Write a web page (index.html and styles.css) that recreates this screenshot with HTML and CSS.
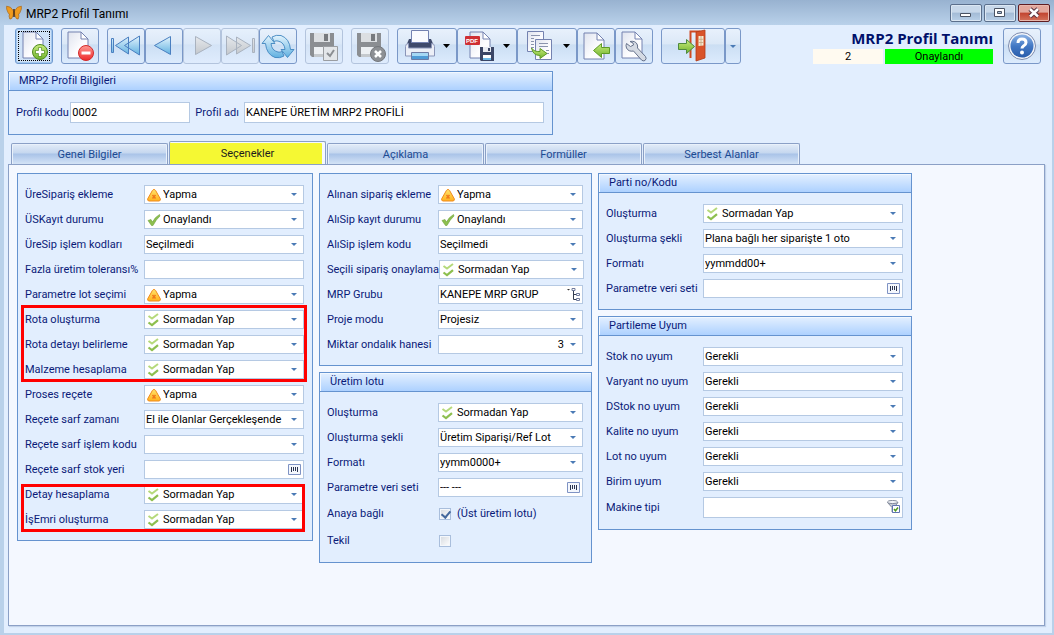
FILE: index.html
```html
<!DOCTYPE html>
<html lang="tr">

<head>
    <meta charset="UTF-8">
    <meta name="viewport" content="width=device-width, initial-scale=1.0">
    <title>MRP2 Profil Tanımı</title>
    <link rel="stylesheet" href="styles.css">
</head>

<body>
    <!-- Ortak ikonlar -->
    <svg class="defs" aria-hidden="true">
        <defs>
            <linearGradient id="gPage" x1="0" y1="0" x2="1" y2="1">
                <stop offset="0" stop-color="#dfe3ee" />
                <stop offset="0.6" stop-color="#fdfdff" />
            </linearGradient>
            <linearGradient id="gBlue" x1="0" y1="0" x2="0" y2="1">
                <stop offset="0" stop-color="#e4f4fd" />
                <stop offset="1" stop-color="#5fb0e0" />
            </linearGradient>
            <linearGradient id="gGray" x1="0" y1="0" x2="0" y2="1">
                <stop offset="0" stop-color="#e6e9ed" />
                <stop offset="1" stop-color="#c3c7cc" />
            </linearGradient>
            <linearGradient id="gGreen" x1="0" y1="0" x2="0" y2="1">
                <stop offset="0" stop-color="#c9ec7e" />
                <stop offset="1" stop-color="#6fb32c" />
            </linearGradient>
            <linearGradient id="gRed" x1="0" y1="0" x2="0" y2="1">
                <stop offset="0" stop-color="#ff9a94" />
                <stop offset="1" stop-color="#ee2a2a" />
            </linearGradient>
            <linearGradient id="gHelp" x1="0" y1="0" x2="0" y2="1">
                <stop offset="0" stop-color="#8eb4e6" />
                <stop offset="0.5" stop-color="#4278c4" />
                <stop offset="1" stop-color="#2a5cab" />
            </linearGradient>
            <linearGradient id="gWarn" x1="0" y1="0" x2="0" y2="1">
                <stop offset="0" stop-color="#ffe36b" />
                <stop offset="1" stop-color="#ffb21e" />
            </linearGradient>
        </defs>
        <symbol id="page" viewBox="0 0 22 28">
            <path d="M1 1h13l7 7v19H1z" fill="url(#gPage)" stroke="#7482b0" />
            <path d="M14 1v7h7z" fill="#fff" stroke="#7482b0" />
        </symbol>
        <symbol id="floppy" viewBox="0 0 24 24">
            <path d="M0 0h24v24H2l-2-2z" fill="#8b8e92" />
            <path d="M4 0h16v9H4z" fill="#dcdfe2" />
            <path d="M14 1h4v7h-4z" fill="#777a7e" />
            <path d="M4 14h16v10H4z" fill="#edf0f3" />
            <path d="M4 21h16v3H4z" fill="#c5c9cd" />
        </symbol>
        <symbol id="caret" viewBox="0 0 7 4">
            <path d="M0 0h7L3.500 4z" fill="#000" />
        </symbol>
        <symbol id="warn" viewBox="0 0 14 13">
            <path d="M7 1q1 0 1.600 1l4.700 8.300q.5 2-1.300 2.200H2q-1.800-.2-1.300-2.200L5.400 2Q6 1 7 1z" fill="url(#gWarn)" stroke="#f08a1c" />
            <path d="M5.500 6.500l3 3.500M8.500 6.500l-3 3.500" stroke="#f07a1c" stroke-width="1.500" />
        </symbol>
        <symbol id="tick" viewBox="0 0 14 13">
            <path d="M1 7l3-1 1.500 2.500Q8 3.500 12.500 1l.5 1.500Q9 6 6 12H4.500z" fill="#8dbf4f" stroke="#6fa33c" stroke-width=".6" />
        </symbol>
        <symbol id="ticks" viewBox="0 0 14 14">
            <path d="M1.500 3l3.500 2.500 6-4.500" fill="none" stroke="#b5d97a" stroke-width="2" />
            <path d="M1.500 9.500l3.500 2.700 6-5" fill="none" stroke="#8dbf4f" stroke-width="2.200" />
        </symbol>
        <symbol id="bars" viewBox="0 0 13 11">
            <path d="M.5.5h12v10H.5z" fill="#f4f7fd" stroke="#7f93c4" />
            <path d="M3.500 3v5M5.500 3v4M7.500 3v4M9.500 3v5" stroke="#2b3550" />
        </symbol>
    </svg>

    <header class="titlebar">
        <svg class="logo" viewBox="0 0 16 16">
            <path d="M7.500 6Q5 1 .6 1.200 0 4 2 7.500q.6 1.500 1.500 1.500-1 2 .3 5 2 1 3.500-4z" fill="#f09b1e" stroke="#a8681c" stroke-width=".7" />
            <path d="M8.500 6Q11 1 15.400 1.200 16 4 14 7.500q-.6 1.500-1.500 1.500 1 2-.3 5-2 1-3.500-4z" fill="#f09b1e" stroke="#a8681c" stroke-width=".7" />
            <path d="M8 4v8" stroke="#4a2c10" stroke-width="1.500" />
        </svg>
        <span class="caption">MRP2 Profil Tanımı</span>
        <div class="window-buttons">
            <button type="button" aria-label="Simge durumuna küçült">
                <svg viewBox="0 0 30 16"><path d="M9.500 8.500h10v3h-10z" fill="#fff" stroke="#4a5363" /></svg>
            </button>
            <button type="button" aria-label="Ekranı kapla">
                <svg viewBox="0 0 30 16"><path d="M9.500 3.500h10v8h-10z" fill="#fff" stroke="#4a5363" /><path d="M12.500 6.500h4v2h-4z" fill="#a9bfd9" stroke="#4a5363" /></svg>
            </button>
            <button type="button" class="close" aria-label="Kapat">
                <svg viewBox="0 0 30 16"><path d="M11 4l8 7.500M19 4l-8 7.500" stroke="#5a3440" stroke-width="4.500" /><path d="M11 4l8 7.500M19 4l-8 7.500" stroke="#fff" stroke-width="2.500" /></svg>
            </button>
        </div>
    </header>

    <main class="window">
        <div class="toolbar">
            <div class="tools">
                <button type="button" class="tool focused" aria-label="Yeni">
                    <svg viewBox="0 0 36 34">
                        <use href="#page" x="6" y="2" width="22" height="28" />
                        <circle cx="24" cy="23" r="7.500" fill="url(#gGreen)" stroke="#4f8a1e" />
                        <path d="M24 18.500v9M19.500 23h9" stroke="#4f8a1e" stroke-width="4" />
                        <path d="M24 19v8M20 23h8" stroke="#fff" stroke-width="2.500" />
                    </svg>
                </button>
                <button type="button" class="tool" aria-label="Sil">
                    <svg viewBox="0 0 36 34">
                        <use href="#page" x="5" y="2" width="22" height="28" />
                        <circle cx="24" cy="24" r="7.500" fill="url(#gRed)" stroke="#d42a2a" />
                        <path d="M19.500 24h9" stroke="#fff" stroke-width="3" />
                    </svg>
                </button>
                <div class="tool-group">
                    <button type="button" class="tool" aria-label="İlk kayıt">
                        <svg viewBox="0 0 36 34" fill="url(#gBlue)" stroke="#4a7fc0">
                            <path d="M3.500 9.500h2v14h-2zM20.500 8v17L7.500 16.500zM31.500 7v19L16.500 16.500z" />
                        </svg>
                    </button>
                    <button type="button" class="tool" aria-label="Önceki kayıt">
                        <svg viewBox="0 0 36 34" fill="url(#gBlue)" stroke="#4a7fc0">
                            <path d="M24.500 7.500v18L8.500 16.500z" />
                        </svg>
                    </button>
                    <button type="button" class="tool" aria-label="Sonraki kayıt" disabled>
                        <svg viewBox="0 0 36 34" fill="url(#gGray)" stroke="#a9b2bf">
                            <path d="M11.500 7.500v18l16-9z" />
                        </svg>
                    </button>
                    <button type="button" class="tool" aria-label="Son kayıt" disabled>
                        <svg viewBox="0 0 36 34" fill="url(#gGray)" stroke="#a9b2bf">
                            <path d="M4.500 7v19l15-9.500zM14.500 8v17l14-8.500zM30.500 9.500h2v14h-2z" />
                        </svg>
                    </button>
                    <button type="button" class="tool" aria-label="Yenile">
                        <svg viewBox="0 0 36 34" fill="url(#gBlue)" stroke="#3f86bf" stroke-width=".9">
                            <path d="M8.500 6.500l6.500 8h-4q.5 7 7 8.500 2 .5 4-.5l2 4.500q-4 2.500-9 1.500Q6.500 25.500 5.500 14.500H2z" />
                            <path d="M27.500 28.500l-6.500-8h4q-.5-7-7-8.500-2-.5-4 .5l-2-4.500q4-2.500 9-1.500Q29.500 9.500 30.500 20.500H34z" />
                        </svg>
                    </button>
                </div>
                <button type="button" class="tool" aria-label="Kaydet" disabled>
                    <svg viewBox="0 0 36 34">
                        <use href="#floppy" x="4" y="4" width="24" height="24" />
                        <path d="M17.500 17.500h14v14h-14z" fill="#e3e6e9" stroke="#9a9da1" />
                        <path d="M21 24l3 3 4-6" fill="none" stroke="#8b8e92" stroke-width="2" />
                    </svg>
                </button>
                <button type="button" class="tool" aria-label="Vazgeç" disabled>
                    <svg viewBox="0 0 36 34">
                        <use href="#floppy" x="5" y="4" width="24" height="24" />
                        <circle cx="26" cy="25" r="7.500" fill="#8d9094" stroke="#74777b" />
                        <path d="M23 22l6 6M29 22l-6 6" stroke="#fff" stroke-width="2.500" />
                    </svg>
                </button>
                <div class="tool-group">
                    <button type="button" class="tool wide" aria-label="Yazdır">
                        <svg viewBox="0 0 58 34">
                            <path d="M8 17l3-7h22l3 7v4H8z" fill="#3f4a6b" />
                            <path d="M13.500 1.500h17v12h-17z" fill="#fafbfe" stroke="#7482b0" />
                            <path d="M7.500 17.500q0-3 3-3V19h23v-4.500q3 0 3 3V27h-29z" fill="#eceff7" stroke="#8a95b8" />
                            <path d="M13.500 23.500h17v7h-17z" fill="#a5d8f5" stroke="#6c7ba5" />
                            <path d="M14 27h16v3H14z" fill="#4f9bd6" />
                            <use href="#caret" x="45" y="15" width="7" height="4" />
                        </svg>
                    </button>
                    <button type="button" class="tool wide" aria-label="PDF olarak kaydet">
                        <svg viewBox="0 0 58 34">
                            <use href="#page" x="11" y="2" width="22" height="28" />
                            <rect x="7" y="7" width="15" height="9" rx="1" fill="#cf2f33" />
                            <text x="8" y="14" class="pdf">PDF</text>
                            <path d="M22 18h14v14H23l-1-1z" fill="#3b4666" />
                            <path d="M25 18h8v5h-8z" fill="#e9ecf3" />
                            <path d="M30 19h2v3h-2z" fill="#3b4666" />
                            <path d="M25 26h8v5h-8z" fill="#fff" />
                            <path d="M25 29h8v2h-8z" fill="#6fb8e6" />
                            <use href="#caret" x="45" y="15" width="7" height="4" />
                        </svg>
                    </button>
                    <button type="button" class="tool wide" aria-label="Kopyala">
                        <svg viewBox="0 0 58 34">
                            <path d="M9.500 2.500h16v20h-16z" fill="url(#gPage)" stroke="#7482b0" />
                            <path d="M13 6.500h9M13 9.500h3M13 12.500h3M13 15.500h3M13 18.500h3" stroke="#8b94ae" />
                            <path d="M17.500 10.500h16v20h-16z" fill="url(#gPage)" stroke="#7482b0" />
                            <path d="M21 14.500h9M21 17.500h9M28 21.500h3M28 24.500h3" stroke="#8b94ae" />
                            <path d="M13.500 19q2.500 4 8.500 3.500v-3l7 5-7 5v-3q-7 0-8.500-7.500z" fill="url(#gGreen)" stroke="#5d9a26" />
                            <use href="#caret" x="45" y="15" width="7" height="4" />
                        </svg>
                    </button>
                    <button type="button" class="tool" aria-label="İçeri al">
                        <svg viewBox="0 0 36 34">
                            <use href="#page" x="5" y="3" width="22" height="28" />
                            <path d="M15.500 21.500l8-7v4h8v6h-8v4z" fill="url(#gGreen)" stroke="#5d9a26" />
                        </svg>
                    </button>
                    <button type="button" class="tool" aria-label="Ayarlar">
                        <svg viewBox="0 0 36 34">
                            <use href="#page" x="5" y="2" width="22" height="28" />
                            <path d="M14 12.500q5-1 7 2.500 1 2 .5 4l8 8.500q1.500 2-.5 4-2 1-3.500-.5l-8-9q-5 1-7-3-1-2.500 0-4.500l4 3 3-1.500-.5-2z" fill="#d5dae3" stroke="#66728c" />
                        </svg>
                    </button>
                </div>
                <div class="tool-group">
                    <button type="button" class="tool exit" aria-label="Çıkış">
                        <svg viewBox="0 0 62 34">
                            <path d="M28.500 29V2.500h10" fill="none" stroke="#cf4a22" stroke-width="2" />
                            <path d="M34 3l9-2v28l-9 3z" fill="#d9532a" stroke="#b23b16" stroke-width=".8" />
                            <path d="M36.500 7h5v9.500l-5 .5z" fill="#f6ead0" />
                            <path d="M39 7v10M36.500 10.300h5M36.500 13.500h5" stroke="#c9a27c" stroke-width=".8" />
                            <path d="M16.500 14.500h8v-4l8 7-8 7v-4h-8z" fill="url(#gGreen)" stroke="#4f8a3e" />
                        </svg>
                    </button>
                    <button type="button" class="tool drop" aria-label="Çıkış seçenekleri"></button>
                </div>
            </div>
            <div class="status">
                <h1>MRP2 Profil Tanımı</h1>
                <div class="status-row">
                    <span class="number">2</span>
                    <span class="approved">Onaylandı</span>
                </div>
            </div>
            <button type="button" class="tool" aria-label="Yardım">
                <svg viewBox="0 0 36 34">
                    <circle cx="18" cy="17" r="13.500" fill="#f4f6fa" stroke="#7d8bad" />
                    <circle cx="18" cy="17" r="11.500" fill="url(#gHelp)" />
                    <path d="M14 14q0-4 4-4t4 3.500q0 2-2.500 3.500-1.500 1-1.500 2.500" fill="none" stroke="#fff" stroke-width="3" />
                    <circle cx="18" cy="23.500" r="2" fill="#fff" />
                </svg>
            </button>
        </div>

        <section class="group profile">
            <h2>MRP2 Profil Bilgileri</h2>
            <div class="profile-fields">
                <label for="profilKodu">Profil kodu</label>
                <input type="text" id="profilKodu" class="code" value="0002">
                <label for="profilAdi">Profil adı</label>
                <input type="text" id="profilAdi" class="name" value="KANEPE ÜRETİM MRP2 PROFİLİ">
            </div>
        </section>

        <nav class="tabs">
            <button type="button">Genel Bilgiler</button>
            <button type="button" class="active">Seçenekler</button>
            <button type="button">Açıklama</button>
            <button type="button">Formüller</button>
            <button type="button">Serbest Alanlar</button>
        </nav>

        <div class="tab-panel">
            <div class="column first">
                <section class="group fields">
                    <div class="row">
                        <label for="ureSiparis">ÜreSipariş ekleme</label>
                        <div class="field select icon"><svg><use href="#warn" /></svg><select id="ureSiparis"><option>Yapma</option></select></div>
                    </div>
                    <div class="row">
                        <label for="usKayit">ÜSKayıt durumu</label>
                        <div class="field select icon"><svg><use href="#tick" /></svg><select id="usKayit"><option>Onaylandı</option></select></div>
                    </div>
                    <div class="row">
                        <label for="ureSipIslem">ÜreSip işlem kodları</label>
                        <div class="field select"><select id="ureSipIslem"><option>Seçilmedi</option></select></div>
                    </div>
                    <div class="row">
                        <label for="tolerans">Fazla üretim toleransı%</label>
                        <div class="field"><input type="text" id="tolerans"></div>
                    </div>
                    <div class="row">
                        <label for="lotSecimi">Parametre lot seçimi</label>
                        <div class="field select icon"><svg><use href="#warn" /></svg><select id="lotSecimi"><option>Yapma</option></select></div>
                    </div>
                    <div class="marked">
                        <div class="row">
                            <label for="rotaOlusturma">Rota oluşturma</label>
                            <div class="field select icon"><svg><use href="#ticks" /></svg><select id="rotaOlusturma"><option>Sormadan Yap</option></select></div>
                        </div>
                        <div class="row">
                            <label for="rotaDetayi">Rota detayı belirleme</label>
                            <div class="field select icon"><svg><use href="#ticks" /></svg><select id="rotaDetayi"><option>Sormadan Yap</option></select></div>
                        </div>
                        <div class="row">
                            <label for="malzeme">Malzeme hesaplama</label>
                            <div class="field select icon"><svg><use href="#ticks" /></svg><select id="malzeme"><option>Sormadan Yap</option></select></div>
                        </div>
                    </div>
                    <div class="row">
                        <label for="proses">Proses reçete</label>
                        <div class="field select icon"><svg><use href="#warn" /></svg><select id="proses"><option>Yapma</option></select></div>
                    </div>
                    <div class="row">
                        <label for="sarfZamani">Reçete sarf zamanı</label>
                        <div class="field select"><select id="sarfZamani"><option>El ile Olanlar Gerçekleşende</option></select></div>
                    </div>
                    <div class="row">
                        <label for="sarfIslem">Reçete sarf işlem kodu</label>
                        <div class="field select"><select id="sarfIslem"><option></option></select></div>
                    </div>
                    <div class="row">
                        <label for="sarfStok">Reçete sarf stok yeri</label>
                        <div class="field lookup"><input type="text" id="sarfStok"><svg><use href="#bars" /></svg></div>
                    </div>
                    <div class="marked short">
                        <div class="row">
                            <label for="detay">Detay hesaplama</label>
                            <div class="field select icon"><svg><use href="#ticks" /></svg><select id="detay"><option>Sormadan Yap</option></select></div>
                        </div>
                        <div class="row">
                            <label for="isEmri">İşEmri oluşturma</label>
                            <div class="field select icon"><svg><use href="#ticks" /></svg><select id="isEmri"><option>Sormadan Yap</option></select></div>
                        </div>
                    </div>
                </section>
            </div>

            <div class="column second">
                <section class="group fields">
                    <div class="row">
                        <label for="alinanSiparis">Alınan sipariş ekleme</label>
                        <div class="field select icon"><svg><use href="#warn" /></svg><select id="alinanSiparis"><option>Yapma</option></select></div>
                    </div>
                    <div class="row">
                        <label for="aliSipKayit">AlıSip kayıt durumu</label>
                        <div class="field select icon"><svg><use href="#tick" /></svg><select id="aliSipKayit"><option>Onaylandı</option></select></div>
                    </div>
                    <div class="row">
                        <label for="aliSipIslem">AlıSip işlem kodu</label>
                        <div class="field select"><select id="aliSipIslem"><option>Seçilmedi</option></select></div>
                    </div>
                    <div class="row">
                        <label for="seciliSiparis">Seçili sipariş onaylama</label>
                        <div class="field select icon"><svg><use href="#ticks" /></svg><select id="seciliSiparis"><option>Sormadan Yap</option></select></div>
                    </div>
                    <div class="row">
                        <label for="mrpGrubu">MRP Grubu</label>
                        <div class="field lookup">
                            <input type="text" id="mrpGrubu" value="KANEPE MRP GRUP">
                            <svg viewBox="0 0 13 13">
                                <path d="M0 1h3L1.500 2.500z" fill="#333" />
                                <path d="M6.500 3v8.500H9M6.500 6.500H9" fill="none" stroke="#333c50" />
                                <path d="M5 .5h3v2H5zM9.500 5.500h3v2h-3zM9.500 10.500h3v2h-3z" fill="#fff" stroke="#6f7a9c" />
                            </svg>
                        </div>
                    </div>
                    <div class="row">
                        <label for="projeModu">Proje modu</label>
                        <div class="field select"><select id="projeModu"><option>Projesiz</option></select></div>
                    </div>
                    <div class="row">
                        <label for="ondalik">Miktar ondalık hanesi</label>
                        <div class="field select right"><select id="ondalik"><option>3</option></select></div>
                    </div>
                </section>

                <section class="group fields">
                    <h2>Üretim lotu</h2>
                    <div class="row">
                        <label for="lotOlusturma">Oluşturma</label>
                        <div class="field select icon"><svg><use href="#ticks" /></svg><select id="lotOlusturma"><option>Sormadan Yap</option></select></div>
                    </div>
                    <div class="row">
                        <label for="lotSekli">Oluşturma şekli</label>
                        <div class="field select"><select id="lotSekli"><option>Üretim Siparişi/Ref Lot</option></select></div>
                    </div>
                    <div class="row">
                        <label for="lotFormati">Formatı</label>
                        <div class="field select"><select id="lotFormati"><option>yymm0000+</option></select></div>
                    </div>
                    <div class="row">
                        <label for="lotVeriSeti">Parametre veri seti</label>
                        <div class="field lookup"><input type="text" id="lotVeriSeti" value="--- ---"><svg><use href="#bars" /></svg></div>
                    </div>
                    <div class="row check">
                        <label for="anaya">Anaya bağlı</label>
                        <input type="checkbox" id="anaya" checked>
                        <label for="anaya">(Üst üretim lotu)</label>
                    </div>
                    <div class="row check">
                        <label for="tekil">Tekil</label>
                        <input type="checkbox" id="tekil">
                    </div>
                </section>
            </div>

            <div class="column third">
                <section class="group fields">
                    <h2>Parti no/Kodu</h2>
                    <div class="row">
                        <label for="partiOlusturma">Oluşturma</label>
                        <div class="field select icon"><svg><use href="#ticks" /></svg><select id="partiOlusturma"><option>Sormadan Yap</option></select></div>
                    </div>
                    <div class="row">
                        <label for="partiSekli">Oluşturma şekli</label>
                        <div class="field select"><select id="partiSekli"><option>Plana bağlı her siparişte 1 oto</option></select></div>
                    </div>
                    <div class="row">
                        <label for="partiFormati">Formatı</label>
                        <div class="field select"><select id="partiFormati"><option>yymmdd00+</option></select></div>
                    </div>
                    <div class="row">
                        <label for="partiVeriSeti">Parametre veri seti</label>
                        <div class="field lookup"><input type="text" id="partiVeriSeti"><svg><use href="#bars" /></svg></div>
                    </div>
                </section>

                <section class="group fields">
                    <h2>Partileme Uyum</h2>
                    <div class="row">
                        <label for="stokUyum">Stok no uyum</label>
                        <div class="field select"><select id="stokUyum"><option>Gerekli</option></select></div>
                    </div>
                    <div class="row">
                        <label for="varyantUyum">Varyant no uyum</label>
                        <div class="field select"><select id="varyantUyum"><option>Gerekli</option></select></div>
                    </div>
                    <div class="row">
                        <label for="dstokUyum">DStok no uyum</label>
                        <div class="field select"><select id="dstokUyum"><option>Gerekli</option></select></div>
                    </div>
                    <div class="row">
                        <label for="kaliteUyum">Kalite no uyum</label>
                        <div class="field select"><select id="kaliteUyum"><option>Gerekli</option></select></div>
                    </div>
                    <div class="row">
                        <label for="lotUyum">Lot no uyum</label>
                        <div class="field select"><select id="lotUyum"><option>Gerekli</option></select></div>
                    </div>
                    <div class="row">
                        <label for="birimUyum">Birim uyum</label>
                        <div class="field select"><select id="birimUyum"><option>Gerekli</option></select></div>
                    </div>
                    <div class="row tall">
                        <label for="makineTipi">Makine tipi</label>
                        <div class="field lookup">
                            <input type="text" id="makineTipi">
                            <svg viewBox="0 0 13 13">
                                <path d="M.5 2.500l4.500 5v4.500l2 .5V7.500l4-5z" fill="#c4cad6" stroke="#6b7488" stroke-width=".8" />
                                <ellipse cx="5.500" cy="2" rx="5" ry="1.600" fill="#f2f4f8" stroke="#6b7488" stroke-width=".8" />
                                <path d="M5.500 5.500h7v7h-7z" fill="#fff" stroke="#5f74b0" />
                                <path d="M7 9l1.500 1.800L11 7.500" fill="none" stroke="#4e9a1e" stroke-width="1.500" />
                            </svg>
                        </div>
                    </div>
                </section>
            </div>
        </div>
    </main>
</body>

</html>
```
FILE: styles.css
```css
* {
    box-sizing: border-box;
}

body {
    font-family: Roboto, "Open Sans", sans-serif;
    font-size: 11px;
    color: #0a1a78;
    background-color: #b9d1ea;
    margin: 0;
    min-height: 100vh;
    display: flex;
    flex-direction: column;
}

button,
input,
select {
    font: inherit;
    margin: 0;
}

.defs {
    position: absolute;
    width: 0;
    height: 0;
}

/* Pencere başlığı */
.titlebar {
    display: flex;
    align-items: center;
    height: 25px;
    padding: 0 4px 0 6px;
    background: linear-gradient(#98b2d0, #b9d1ea);
    color: #000;
}

.logo {
    width: 16px;
    height: 16px;
    margin-right: 4px;
}

.caption {
    font-size: 12px;
    line-height: 16px;
    flex: 1;
    padding-top: 2px;
}

.window-buttons {
    display: flex;
    gap: 2px;
}

.window-buttons button {
    width: 32px;
    height: 18px;
    padding: 0;
    border: 1px solid #5b6f8c;
    border-radius: 2px;
    background: linear-gradient(#c8d8ea 45%, #a3bbd6 50%, #b9d0e8);
    box-shadow: inset 0 0 0 1px #dbe7f3;
}

.window-buttons .close {
    border-color: #5f1d22;
    background: linear-gradient(#e3a79c 45%, #c2442f 50%, #d3735c);
    box-shadow: inset 0 0 0 1px #e8b8ae;
}

.window-buttons svg {
    display: block;
    width: 30px;
    height: 16px;
}

.window {
    flex: 1;
    display: flex;
    flex-direction: column;
    margin: 0 2px 2px 4px;
    padding: 3px 7px 7px 4px;
    background-color: #e2eefe;
}

/* Araç çubuğu */
.toolbar {
    display: flex;
    gap: 10px;
    padding: 0 4px 0 7px;
    margin-bottom: 7px;
}

.tools {
    flex: 1;
    display: flex;
    gap: 8px;
}

.tool-group {
    display: flex;
}

.tool {
    width: 38px;
    height: 36px;
    padding: 0;
    border: 1px solid #7a98c8;
    border-radius: 3px;
    background: linear-gradient(#e8f1fc, #dbe8f7 45%, #cbdef3 46%, #dcebfd);
}

.tool:disabled {
    border-color: #b3c4dd;
    background: linear-gradient(#e6f0fc, #dbe8f8 45%, #d3e3f6 46%, #dfecfd);
}

.tool svg {
    display: block;
    width: 100%;
    height: 34px;
}

.tool.focused {
    border-color: #6f9ad0;
    background: #cfe2f7;
    box-shadow: inset 0 0 0 1px #a4c8ee;
    outline: 1px dotted #000;
    outline-offset: -4px;
}

.tool.wide {
    width: 60px;
}

.tool.exit {
    width: 64px;
}

.tool.drop {
    width: 16px;
    display: grid;
    place-items: center;
}

.tool.drop::after {
    content: "";
    border: 3px solid transparent;
    border-top-color: #4a7ab5;
    border-bottom: 0;
}

.pdf {
    font-family: "Liberation Sans", sans-serif;
    font-weight: bold;
    font-size: 6px;
    fill: #fff;
}

.status {
    width: 180px;
}

.status h1 {
    margin: 0;
    font-family: "Open Sans", sans-serif;
    font-size: 15px;
    line-height: 21px;
    text-align: right;
    white-space: nowrap;
    color: #00106b;
}

.status-row {
    display: flex;
    gap: 2px;
    text-align: center;
    line-height: 15px;
    color: #000;
}

.number {
    width: 70px;
    background-color: #fffaf0;
}

.approved {
    flex: 1;
    background-color: #00ff00;
}

/* Gruplar */
.group {
    border: 1px solid #6593cf;
    background-color: #e2eefe;
}

.group h2 {
    margin: 0;
    height: 19px;
    padding-left: 10px;
    border-bottom: 1px solid #6593cf;
    background: linear-gradient(#e4f0ff, #add1ff);
    box-shadow: inset 1px 1px 0 #f2f8ff;
    font-size: 11px;
    font-weight: normal;
    line-height: 18px;
}

.profile {
    width: 545px;
}

.profile-fields {
    display: flex;
    align-items: center;
    padding: 11px 8px 11px 7px;
}

.profile-fields input {
    height: 21px;
}

.profile-fields label {
    white-space: nowrap;
}

.profile-fields .code {
    width: 120px;
    margin: 0 5px 0 auto;
}

.profile-fields .name {
    width: 300px;
    margin-left: 5px;
}

input[type="text"],
select {
    display: block;
    min-width: 0;
    padding: 0 1px;
    border: 1px solid #b5c9e3;
    border-radius: 0;
    background-color: #fff;
    color: #000;
}

/* Sekmeler */
.tabs {
    display: flex;
    align-items: flex-end;
    gap: 1px;
    padding-left: 3px;
    margin-top: 6px;
}

.tabs button {
    width: 157px;
    height: 21px;
    padding: 0;
    border: 1px solid #8ba0c6;
    border-bottom: 0;
    border-radius: 2px 2px 0 0;
    background: linear-gradient(#e3ecf8, #c5d7ef 45%, #a9c3e8 50%, #d4e3f6);
    box-shadow: inset 1px 1px 0 #e9f1fb, inset -1px 0 0 #e9f1fb;
    color: #1c4a92;
}

.tabs .active {
    height: 23px;
    background: #f5f833;
    box-shadow: inset -3px 1px 0 #f4f8ff;
    color: #1c1c1c;
}

.tab-panel {
    flex: 1;
    display: flex;
    align-items: flex-start;
    gap: 6px;
    padding: 8px;
    border: 1px solid #8ba0c6;
    background-color: #f4f8ff;
    box-shadow: 1px 1px 1px #c3d3ea;
}

.column {
    display: flex;
    flex-direction: column;
    gap: 6px;
}

.first {
    width: 296px;
}

.second {
    width: 273px;
}

.third {
    width: 314px;
}

/* Alanlar */
.fields {
    padding-bottom: 8px;
}

.fields > :first-child:not(h2),
.fields h2 + .row {
    margin-top: 8px;
}

.row {
    display: flex;
    align-items: center;
    justify-content: space-between;
    height: 25px;
    padding: 0 8px 0 7px;
}

.row label {
    white-space: nowrap;
}

.field {
    position: relative;
    flex: none;
    height: 19px;
}

.first .field {
    width: 160px;
}

.second .field {
    width: 145px;
}

.third .field {
    width: 200px;
}

.field input,
.field select {
    width: 100%;
    height: 100%;
}

.field select {
    appearance: none;
}

.select::after {
    content: "";
    position: absolute;
    top: 8px;
    right: 7px;
    border: 3px solid transparent;
    border-top-color: #4a7ab5;
    border-bottom: 0;
    pointer-events: none;
}

.field svg {
    position: absolute;
    top: 3px;
    left: 3px;
    width: 14px;
    height: 14px;
    pointer-events: none;
}

.icon select {
    padding-left: 18px;
}

.right select {
    padding-right: 18px;
    text-align: right;
    text-align-last: right;
}

.field.lookup svg {
    left: auto;
    right: 3px;
    width: 13px;
    height: 13px;
}

.tall {
    height: 27px;
}

.tall .field {
    height: 21px;
}

.check {
    height: 27px;
    justify-content: flex-start;
    gap: 6px;
}

.check label:first-child {
    width: 106px;
}

.check input {
    appearance: none;
    width: 12px;
    height: 12px;
    border: 1px solid #a9bedc;
    background: linear-gradient(135deg, #d5d9df, #fff);
    box-shadow: inset 0 0 0 1px #f4f7fb;
}

.check input:checked::after {
    content: "";
    display: block;
    width: 4px;
    height: 7px;
    margin: 0 0 0 3px;
    border: solid #44689c;
    border-width: 0 2px 2px 0;
    transform: rotate(40deg);
}

/* Kırmızı işaretli satırlar */
.marked {
    position: relative;
}

.marked::after {
    content: "";
    position: absolute;
    inset: -2px 5px 0 3px;
    border: 3px solid #f00;
    pointer-events: none;
}

.marked.short::after {
    top: 2px;
    right: 7px;
}
```
